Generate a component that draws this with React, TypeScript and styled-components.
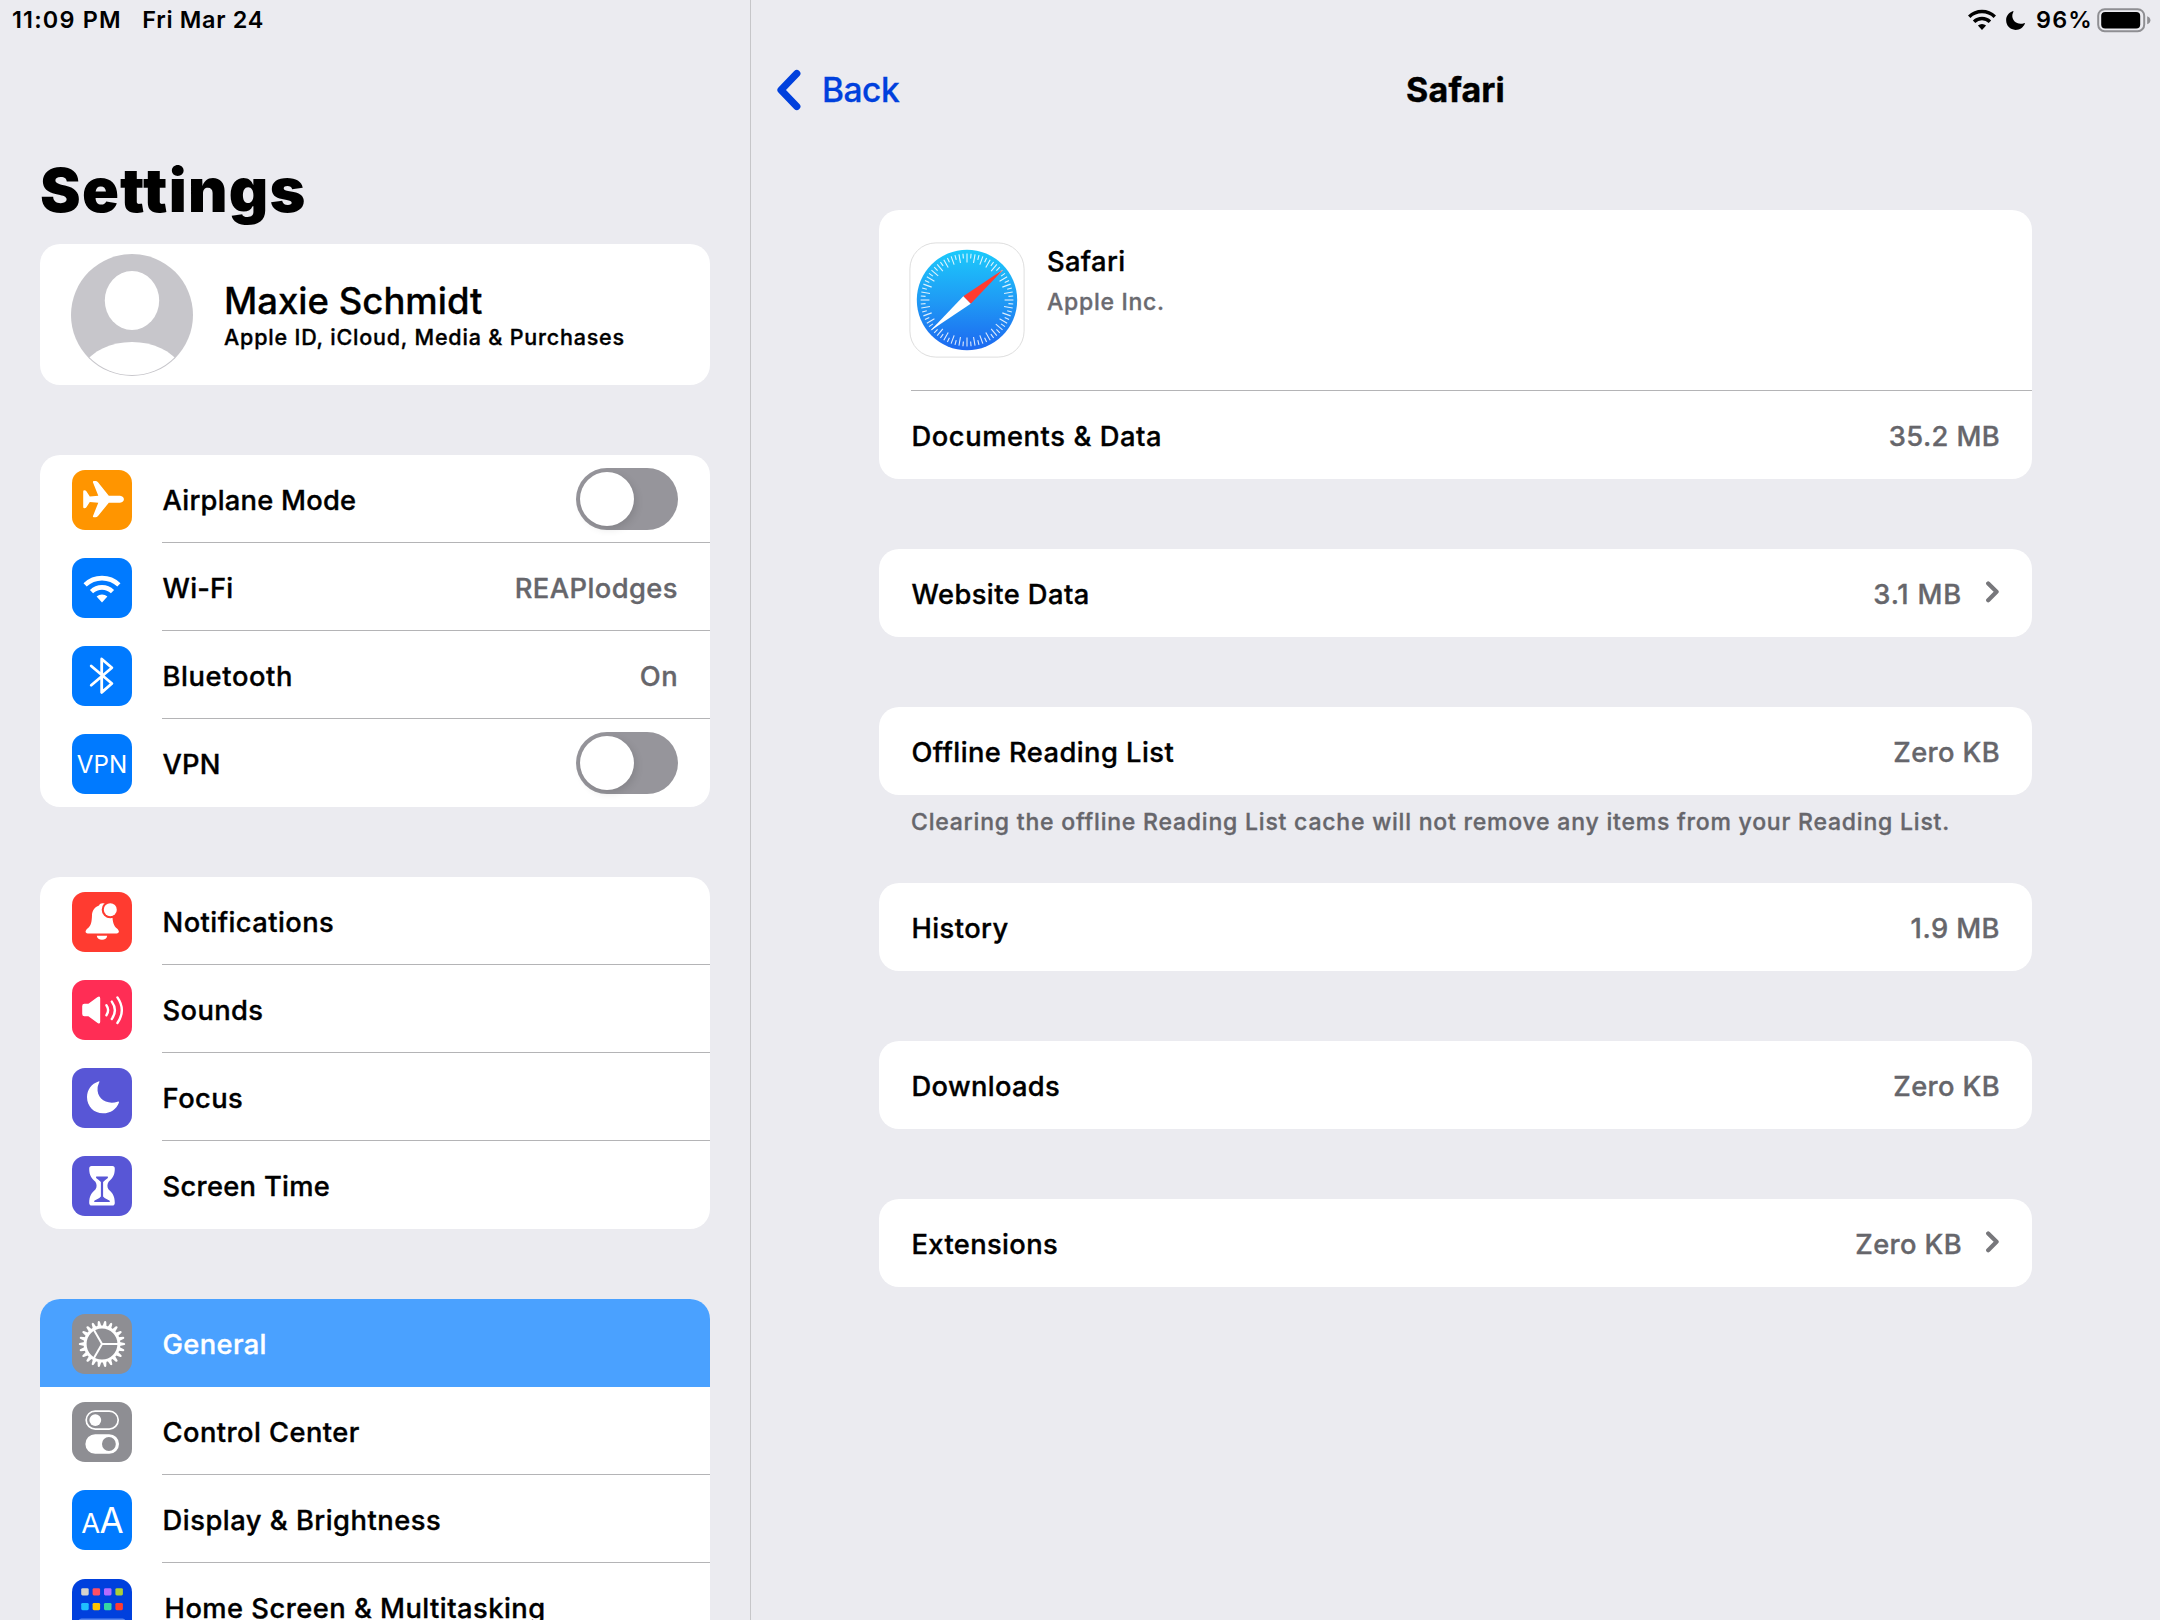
import React from "react";
import styled, { createGlobalStyle } from "styled-components";

const GlobalStyle = createGlobalStyle`
  * { box-sizing: border-box; }
  html, body { margin: 0; padding: 0; background: #ebebf0; overflow: hidden; }
  body {
    font-family: Inter, "Liberation Sans", sans-serif;
    color: #000;
    -webkit-font-smoothing: antialiased;
  }
`;

const Screen = styled.div`
  display: grid;
  grid-template-columns: 751px 1fr;
  width: 2160px;
  height: 1620px;
  overflow: hidden;
  background: #ebebf0;
`;

const Sidebar = styled.aside`
  display: flex;
  flex-direction: column;
  height: 1620px;
  overflow: hidden;
  border-right: 1px solid #c6c6c9;
`;

const StatusBar = styled.div<{ $end?: boolean }>`
  display: flex;
  flex: none;
  align-items: center;
  justify-content: ${(p) => (p.$end ? "flex-end" : "flex-start")};
  height: 39px;
  padding: ${(p) => (p.$end ? "1px 9px 0 0" : "0 0 0 12px")};
`;

const StatusText = styled.span<{ $spacing?: number }>`
  font-size: 23.4px;
  font-weight: 600;
  line-height: 30px;
  white-space: nowrap;
  letter-spacing: ${(p) => p.$spacing ?? 0}px;
`;

const StatusDate = styled(StatusText)`
  margin-left: 20.5px;
`;

const BatteryPercent = styled(StatusText)`
  margin: 0 4px 0 11px;
`;

const PageTitle = styled.h1`
  flex: none;
  margin: 113px 0 0 40px;
  height: 92px;
  font-size: 61px;
  font-weight: 900;
  line-height: 76px;
  letter-spacing: 1.25px;
`;

const SidebarGroups = styled.div`
  display: flex;
  flex: none;
  flex-direction: column;
  gap: 70px;
  padding: 0 40px;
`;

const Card = styled.section`
  flex: none;
  overflow: hidden;
  border-radius: 20px;
  background: #fff;
`;

const ProfileCard = styled(Card)`
  display: flex;
  align-items: center;
  height: 141px;
  padding-left: 31px;
`;

const ProfileText = styled.div`
  margin: 5px 0 0 31px;
`;

const ProfileName = styled.div`
  font-size: 36.5px;
  font-weight: 500;
  line-height: 40px;
  letter-spacing: 0;
  -webkit-text-stroke: 0.3px currentColor;
`;

const ProfileNote = styled.div`
  font-size: 21.5px;
  font-weight: 500;
  line-height: 32px;
  letter-spacing: 0.81px;
  -webkit-text-stroke: 0.35px currentColor;
`;

const Row = styled.div<{ $selected?: boolean }>`
  display: flex;
  height: 88px;
  padding-left: 32px;
  background: ${(p) => (p.$selected ? "#4aa1ff" : "transparent")};
  color: ${(p) => (p.$selected ? "#fff" : "#000")};
`;

const IconTile = styled.div<{ $bg: string; $drop?: number }>`
  flex: none;
  display: flex;
  align-items: center;
  justify-content: center;
  width: 60px;
  height: 60px;
  margin: ${(p) => 15 + (p.$drop ?? 0)}px 30px 0 0;
  overflow: hidden;
  border-radius: 13px;
  background: ${(p) => p.$bg};
  color: #fff;
`;

const RowBody = styled.div<{ $line?: boolean; $inset?: number }>`
  display: flex;
  flex: 1;
  align-items: center;
  justify-content: space-between;
  padding: ${(p) => (p.$line ? 4 : 3)}px 32px 0 ${(p) => 0.6 + (p.$inset ?? 0)}px;
  border-bottom: ${(p) => (p.$line ? "1px solid #b4b4b6" : "none")};
`;

const Label = styled.span<{ $spacing?: number }>`
  font-size: 27.3px;
  font-weight: 500;
  line-height: 34px;
  white-space: nowrap;
  letter-spacing: ${(p) => p.$spacing ?? 0.44}px;
  -webkit-text-stroke: 0.35px currentColor;
`;

const Value = styled(Label)`
  color: #66666b;
`;

const ValueGroup = styled.div`
  display: flex;
  align-items: center;
`;

const Switch = styled.div`
  width: 102px;
  height: 62px;
  margin-top: -4px;
  padding: 4px;
  border-radius: 31px;
  background: #96959b;
`;

const Knob = styled.div`
  width: 54px;
  height: 54px;
  border-radius: 50%;
  background: #fff;
  box-shadow: 2px 3px 8px rgba(0, 0, 0, 0.12);
`;

const VpnMark = styled.span`
  margin-top: 1px;
  font-size: 24.2px;
  font-weight: 400;
  line-height: 30px;
`;

const LettersMark = styled.span`
  display: flex;
  align-items: baseline;
  margin-top: 3px;
`;

const Letter = styled.span<{ $size: number }>`
  font-size: ${(p) => p.$size}px;
  font-weight: 400;
  line-height: 36px;
  letter-spacing: -0.8px;
`;

const Detail = styled.main`
  display: flex;
  flex-direction: column;
`;

const NavBar = styled.header`
  display: grid;
  grid-template-columns: 1fr auto 1fr;
  align-items: center;
  height: 102px;
  padding: 0 26px;
`;

const BackButton = styled.a`
  display: flex;
  align-items: center;
  gap: 21px;
  color: #0040dd;
`;

const BackLabel = styled.span`
  font-size: 33.5px;
  font-weight: 500;
  line-height: 40px;
  letter-spacing: -0.45px;
  -webkit-text-stroke: 0.3px currentColor;
`;

const NavTitle = styled.h2`
  margin: 0;
  font-size: 34px;
  font-weight: 700;
  line-height: 40px;
  letter-spacing: 0.15px;
  -webkit-text-stroke: 0.4px currentColor;
`;

const DetailGroups = styled.div`
  display: flex;
  flex-direction: column;
  width: 1153px;
  margin: 69px 0 0 128px;
  gap: 70px;
`;

const AppHeader = styled.div`
  display: flex;
  height: 181px;
  margin-left: 32px;
  padding-top: 32px;
  border-bottom: 1px solid #b4b4b6;
`;

const AppText = styled.div`
  margin: 3px 0 0 22px;
`;

const AppVendor = styled.div`
  margin-top: 6px;
  font-size: 23px;
  font-weight: 500;
  line-height: 34px;
  letter-spacing: 0.72px;
  color: #6a6a70;
  -webkit-text-stroke: 0.35px currentColor;
`;

const DetailRow = styled.div`
  display: flex;
  align-items: center;
  justify-content: space-between;
  height: 88px;
  padding: 3px 32px 0 32.5px;
`;

const NotedGroup = styled.div`
  height: 106px;
`;

const Footnote = styled.p`
  margin: 10px 0 0 32px;
  font-size: 23px;
  font-weight: 500;
  line-height: 34px;
  letter-spacing: 0.79px;
  white-space: nowrap;
  color: #66666b;
  -webkit-text-stroke: 0.35px currentColor;
`;

const Glyph = styled.svg`
  display: block;
  flex: none;
`;

const StatusMoon = styled(Glyph)`
  margin-left: 10px;
`;

const AppIcon = styled(Glyph)`
  margin-left: -2px;
`;

const RowChevron = styled(Glyph)`
  margin: -6px 1px 0 24px;
`;

const WifiShape = () => (
  <>
    <g fill="none" stroke="currentColor" strokeWidth="4.6">
      <path d="M13.1 26.9A24.5 24.5 0 0 1 46.9 26.9" />
      <path d="M19.5 33.6A15.2 15.2 0 0 1 40.5 33.6" />
    </g>
    <path d="M24.6 38.6A8.2 8.2 0 0 1 35.4 38.6L30 44.6Z" fill="currentColor" />
  </>
);

const MoonShape = () => (
  <path
    fill="currentColor"
    d="M27 13.2C19 15.8 15 22.3 15 29C15 38.5 22 45.3 31 45.3C38.5 45.3 44.7 41 47 34.4C47.2 33.5 46.4 33.5 45.5 33.8C34.5 37.2 24.4 30.5 25.6 19.6C25.9 17.3 26.9 15.4 27.4 14.1C27.6 13.4 27.4 13.1 27 13.2Z"
  />
);

const Tile = ({ children }: { children: React.ReactNode }) => (
  <Glyph width="60" height="60" viewBox="0 0 60 60">
    {children}
  </Glyph>
);

const AirplaneIcon = () => (
  <Tile>
    <path
      fill="#fff"
      d="M48 25.7Q51.9 26.4 51.9 29.2Q51.9 32 48 32.7H36.8L26 46.1Q24.9 47.3 23.4 47.3H21.8Q20.6 47 21 45.9L26.3 32.7L17.8 32L14.4 37.2Q13.7 38.2 12.4 38.2Q11.2 38.2 11.2 37V21.4Q11.2 20.2 12.4 20.2Q13.7 20.2 14.4 21.2L17.8 26.4L26.3 25.7L21 12.5Q20.6 11.4 21.8 11.1H23.4Q24.9 11.1 26 12.3L36.8 25.7Z"
    />
  </Tile>
);

const BluetoothIcon = () => (
  <Tile>
    <path
      d="M19.2 20L39.9 37.5L29.7 46.4V13L39.9 21.7L19.2 39.2"
      fill="none"
      stroke="#fff"
      strokeWidth="2.8"
      strokeLinejoin="round"
      strokeLinecap="round"
    />
  </Tile>
);

const BellIcon = () => (
  <Tile>
    <path
      fill="#fff"
      d="M30.5 11.2C29 11.2 27.6 12 27 13.4C22.6 15 20.2 18.4 20 23C19.8 30.5 19 33.5 15.5 36.6C13 38.8 12.8 41.4 15.8 41.4H44.6C47.7 41.4 47.5 38.8 45 36.6C41.5 33.5 40.6 30 40.4 23L36 11.2Z"
    />
    <path fill="#fff" d="M24.8 43.8H35.2C35 46.2 32.8 47.8 30 47.8S25 46.2 24.8 43.8Z" />
    <circle cx="38.3" cy="17.7" r="8.6" fill="#ff3b30" />
    <circle cx="38.3" cy="17.7" r="6.5" fill="#fff" />
  </Tile>
);

const SpeakerIcon = () => (
  <Tile>
    <path
      fill="#fff"
      d="M12.4 23.8H16.4L25.6 17Q28.2 15.6 28.2 18.4V41.8Q28.2 44.6 25.6 43L16.4 36.2H12.4Q10.2 36.2 10.2 34V26Q10.2 23.8 12.4 23.8Z"
    />
    <g fill="none" stroke="#fff" strokeWidth="2.4" strokeLinecap="round">
      <path d="M34.4 25.3Q37.9 30.2 34.4 35.3" />
      <path d="M39.8 21.6Q46 30.2 39.8 39" />
      <path d="M45.4 17.4Q54.3 30.2 45.4 43" />
    </g>
  </Tile>
);

const HourglassIcon = () => (
  <Tile>
    <path
      fill="#fff"
      d="M19.6 10H40.4Q42.8 10 42.8 12.8C42.8 19.5 40.3 22.7 36.6 25.8Q34.2 29.8 36.6 33.6C40.3 36.8 42.8 40.3 42.8 46.8Q42.8 49.6 40.4 49.6H19.6Q17.2 49.6 17.2 46.8C17.2 40.3 19.7 36.8 23.4 33.6Q25.8 29.8 23.4 25.8C19.7 22.7 17.2 19.5 17.2 12.8Q17.2 10 19.6 10Z"
    />
    <path
      fill="#5856d6"
      d="M24.3 20.6H35.7Q36.4 21.2 35.6 22.2Q32.2 24.6 31.1 26V40.4Q32 42 35.4 43.4Q38 44.5 38 45.3Q38 46 37 46H23Q22 46 22 45.3Q22 44.5 24.6 43.4Q28 42 28.9 40.4V26Q27.8 24.6 24.4 22.2Q23.6 21.2 24.3 20.6Z"
    />
  </Tile>
);

const TEETH = 22;

const GearIcon = () => (
  <Tile>
    <circle cx="30" cy="30" r="16.9" fill="none" stroke="#fff" strokeWidth="3" />
    {Array.from({ length: TEETH }, (_, i) => (
      <path
        key={i}
        d="M47.5 28L52.4 28.9Q53.2 29.2 53.2 30T52.4 31.1L47.5 32Z"
        fill="#fff"
        transform={`rotate(${(i * 360) / TEETH} 30 30)`}
      />
    ))}
    <g stroke="#fff" strokeWidth="2">
      {[0, 120, 240].map((a) => (
        <path key={a} d="M30 30H47" transform={`rotate(${a} 30 30)`} />
      ))}
    </g>
  </Tile>
);

const TogglesIcon = () => (
  <Tile>
    <rect x="14.2" y="9.1" width="32" height="18" rx="9" fill="none" stroke="#fff" strokeWidth="1.7" />
    <circle cx="23.3" cy="18.1" r="5.9" fill="#fff" />
    <rect x="13.4" y="32.2" width="33.6" height="19.6" rx="9.8" fill="#fff" />
    <circle cx="36.9" cy="42" r="6.9" fill="#8e8e93" />
  </Tile>
);

const APP_COLORS = [
  ["#d6d3cd", "#ff4f64", "#b46bff", "#acd038"],
  ["#1fbfff", "#ffc600", "#36d6a3", "#ff3b30"],
];

const HomeIcon = () => (
  <Tile>
    {APP_COLORS.map((line, r) =>
      line.map((c, i) => (
        <rect key={c} x={9.2 + i * 11.4} y={9.2 + r * 14.7} width="7.5" height="7.3" rx="1.4" fill={c} />
      ))
    )}
    <rect x="6.5" y="39.5" width="47" height="15" rx="3" fill="#5a87ee" />
  </Tile>
);

const SafariIcon = () => (
  <AppIcon width="116" height="116" viewBox="0 0 116 116">
    <defs>
      <linearGradient id="dial" x1="0" y1="0" x2="0" y2="1">
        <stop offset="0" stopColor="#1ccafb" />
        <stop offset="0.5" stopColor="#1f9bf5" />
        <stop offset="1" stopColor="#1d68f0" />
      </linearGradient>
    </defs>
    <rect x="0.9" y="0.9" width="114.2" height="114.2" rx="26" fill="#fff" stroke="#dedede" strokeWidth="1" />
    <circle cx="58" cy="58" r="50.2" fill="url(#dial)" />
    <g stroke="#fff" strokeWidth="1.1" opacity="0.85">
      {Array.from({ length: 72 }, (_, i) => (
        <path
          key={i}
          d={i % 2 ? "M58 11.6V16.4" : "M58 11.6V20.4"}
          transform={`rotate(${i * 5} 58 58)`}
        />
      ))}
    </g>
    <path d="M94.6 27.2L54.3 54.2L61.7 61.8Z" fill="#ff3b30" />
    <path d="M21.4 88.8L54.3 54.2L61.7 61.8Z" fill="#fff" />
  </AppIcon>
);

const Chevron = () => (
  <RowChevron width="13" height="22" viewBox="0 0 13 22">
    <path
      d="M2.2 2.4L10.6 10.8L2.2 19.2"
      fill="none"
      stroke="#77777b"
      strokeWidth="4.2"
      strokeLinecap="round"
      strokeLinejoin="round"
    />
  </RowChevron>
);

const Toggle = () => (
  <Switch>
    <Knob />
  </Switch>
);

type Item = {
  label: string;
  spacing?: number;
  bg: string;
  icon: React.ReactNode;
  value?: string;
  toggle?: boolean;
  selected?: boolean;
  inset?: number;
  drop?: number;
};

const GROUPS: Item[][] = [
  [
    { label: "Airplane Mode", bg: "#ff9500", icon: <AirplaneIcon />, toggle: true, spacing: 0.25 },
    { label: "Wi-Fi", bg: "#007aff", icon: <Tile><WifiShape /></Tile>, value: "REAPlodges", spacing: 0.2 },
    { label: "Bluetooth", bg: "#007aff", icon: <BluetoothIcon />, value: "On", spacing: 0.6 },
    { label: "VPN", bg: "#007aff", icon: <VpnMark>VPN</VpnMark>, toggle: true, spacing: 0.1 },
  ],
  [
    { label: "Notifications", bg: "#ff3b30", icon: <BellIcon /> },
    { label: "Sounds", bg: "#ff2d55", icon: <SpeakerIcon />, spacing: 0.35 },
    { label: "Focus", bg: "#5856d6", icon: <Tile><MoonShape /></Tile> },
    { label: "Screen Time", bg: "#5856d6", icon: <HourglassIcon />, spacing: 0.3 },
  ],
  [
    { label: "General", bg: "#8e8e93", icon: <GearIcon />, selected: true, spacing: 0.35 },
    { label: "Control Center", bg: "#8e8e93", icon: <TogglesIcon /> },
    {
      label: "Display & Brightness",
      bg: "#007aff",
      icon: (
        <LettersMark>
          <Letter $size={27.5}>A</Letter>
          <Letter $size={35}>A</Letter>
        </LettersMark>
      ),
      spacing: 0.51,
    },
    { label: "Home Screen & Multitasking", bg: "#0040dd", icon: <HomeIcon />, inset: 2, drop: 1, spacing: 0.48 },
  ],
];

const SettingRow = ({ item, line }: { item: Item; line: boolean }) => (
  <Row $selected={item.selected}>
    <IconTile $bg={item.bg} $drop={item.drop}>
      {item.icon}
    </IconTile>
    <RowBody $line={line} $inset={item.inset}>
      <Label $spacing={item.spacing}>{item.label}</Label>
      {item.value && <Value>{item.value}</Value>}
      {item.toggle && <Toggle />}
    </RowBody>
  </Row>
);

type DataRowProps = {
  label: string;
  value: string;
  link?: boolean;
  spacing?: number;
  valueSpacing?: number;
};

const DataRow = ({ label, value, link, spacing, valueSpacing }: DataRowProps) => (
  <DetailRow>
    <Label $spacing={spacing}>{label}</Label>
    <ValueGroup>
      <Value $spacing={valueSpacing ?? 0.38}>{value}</Value>
      {link && <Chevron />}
    </ValueGroup>
  </DetailRow>
);

const Avatar = () => (
  <Glyph width="122" height="122" viewBox="0 0 122 122">
    <defs>
      <clipPath id="face">
        <circle cx="61" cy="61" r="60" />
      </clipPath>
    </defs>
    <circle cx="61" cy="61" r="61" fill="#c7c6cb" />
    <g clipPath="url(#face)" fill="#fff">
      <ellipse cx="61" cy="46.5" rx="27.2" ry="29.5" />
      <path d="M10 113C22 96 40 88 61 88S100 96 112 113V122H10Z" />
    </g>
  </Glyph>
);

const Battery = () => (
  <Glyph width="54" height="26" viewBox="0 0 54 26">
    <rect x="1.2" y="2.2" width="46" height="22" rx="6.5" fill="none" stroke="#8f8f93" strokeWidth="2" />
    <rect x="4.2" y="5" width="39" height="16.4" rx="4" fill="#000" />
    <path d="M50.2 9.2Q53.4 10.4 53.4 13.2T50.2 17.2Z" fill="#8f8f93" />
  </Glyph>
);

export default function App() {
  return (
    <>
      <GlobalStyle />
      <Screen>
        <Sidebar>
          <StatusBar>
            <StatusText $spacing={1.2}>11:09 PM</StatusText>
            <StatusDate $spacing={0.7}>Fri Mar 24</StatusDate>
          </StatusBar>
          <PageTitle>Settings</PageTitle>
          <SidebarGroups>
            <ProfileCard>
              <Avatar />
              <ProfileText>
                <ProfileName>Maxie Schmidt</ProfileName>
                <ProfileNote>Apple ID, iCloud, Media &amp; Purchases</ProfileNote>
              </ProfileText>
            </ProfileCard>
            {GROUPS.map((group, g) => (
              <Card key={g}>
                {group.map((item, i) => (
                  <SettingRow
                    key={item.label}
                    item={item}
                    line={!item.selected && i < group.length - 1}
                  />
                ))}
              </Card>
            ))}
          </SidebarGroups>
        </Sidebar>
        <Detail>
          <StatusBar $end>
            <Glyph width="28" height="22" viewBox="11.5 17 37 28.5">
              <WifiShape />
            </Glyph>
            <StatusMoon width="19" height="19" viewBox="15 13 32 32.5">
              <MoonShape />
            </StatusMoon>
            <BatteryPercent $spacing={1.2}>96%</BatteryPercent>
            <Battery />
          </StatusBar>
          <NavBar>
            <BackButton>
              <Glyph width="24" height="42" viewBox="0 0 24 42">
                <path
                  d="M19.8 4.6L4 21L19.8 37.4"
                  fill="none"
                  stroke="currentColor"
                  strokeWidth="7.2"
                  strokeLinecap="round"
                  strokeLinejoin="round"
                />
              </Glyph>
              <BackLabel>Back</BackLabel>
            </BackButton>
            <NavTitle>Safari</NavTitle>
          </NavBar>
          <DetailGroups>
            <Card>
              <AppHeader>
                <SafariIcon />
                <AppText>
                  <Label $spacing={0.35}>Safari</Label>
                  <AppVendor>Apple Inc.</AppVendor>
                </AppText>
              </AppHeader>
              <DataRow label="Documents &amp; Data" value="35.2 MB" spacing={0.58} />
            </Card>
            <Card>
              <DataRow label="Website Data" value="3.1 MB" valueSpacing={0.8} link />
            </Card>
            <NotedGroup>
              <Card>
                <DataRow label="Offline Reading List" value="Zero KB" />
              </Card>
              <Footnote>
                Clearing the offline Reading List cache will not remove any items from your Reading List.
              </Footnote>
            </NotedGroup>
            <Card>
              <DataRow label="History" value="1.9 MB" valueSpacing={0.45} />
            </Card>
            <Card>
              <DataRow label="Downloads" value="Zero KB" spacing={0.35} />
            </Card>
            <Card>
              <DataRow label="Extensions" value="Zero KB" spacing={0.38} link />
            </Card>
          </DetailGroups>
        </Detail>
      </Screen>
    </>
  );
}
